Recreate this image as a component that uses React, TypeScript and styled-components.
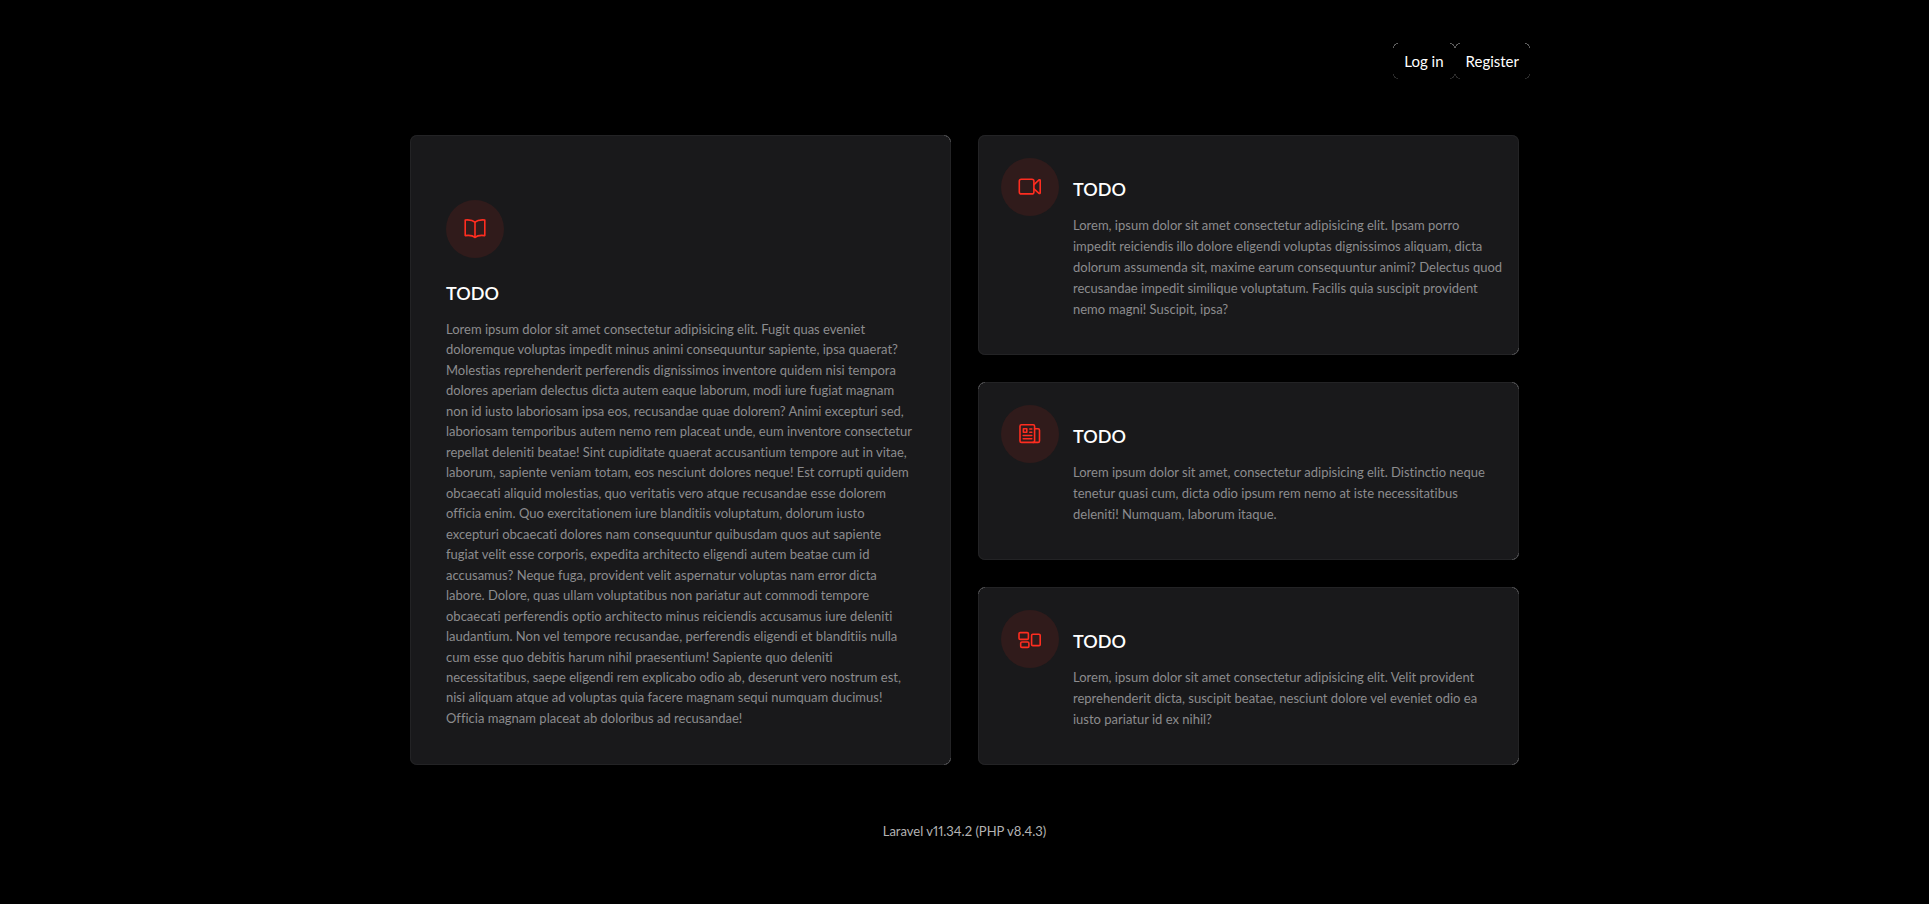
import React from 'react';
import styled, { createGlobalStyle, css } from 'styled-components';

const GlobalStyle = createGlobalStyle`
  *, *::before, *::after { box-sizing: border-box; }
  body {
    margin: 0;
    background: #000;
    color: #8c8c8e;
    font-family: Lato, "Open Sans", sans-serif;
    font-size: 13px;
    font-variant-ligatures: none;
    -webkit-font-smoothing: antialiased;
  }
`;

/* Faint highlights that run along the rounded corners of a box. */
const corner = (x: string, y: string, radius: number, color: string) =>
  `radial-gradient(circle at ${x === 'left' ? '100%' : '0'} ${y === 'top' ? '100%' : '0'},
    transparent ${radius - 1}px, ${color} ${radius - 1}px, ${color} ${radius}px, transparent ${radius}px)
    ${x} ${y} / ${radius}px ${radius}px no-repeat`;

const Page = styled.div`
  width: 100%;
  max-width: 1157px;
  margin: 0 auto;
  padding: 43px 24px 56px;
`;

const Nav = styled.nav`
  display: flex;
  justify-content: flex-end;
  margin-right: -11px;
`;

const NavLink = styled.a`
  padding: 7px 11px;
  border-radius: 5px;
  color: #fff;
  font-size: 15px;
  line-height: 22px;
  text-decoration: none;
  background:
    ${corner('left', 'top', 5, '#6a6a6a')},
    ${corner('right', 'top', 5, '#6a6a6a')},
    ${corner('left', 'bottom', 5, '#333')},
    ${corner('right', 'bottom', 5, '#333')};
`;

const Cards = styled.main`
  display: grid;
  grid-template-columns: minmax(0, 1fr);
  gap: 27px;
  margin-top: 56px;

  @media (min-width: 1100px) {
    grid-template-columns: repeat(2, minmax(0, 1fr));
  }
`;

type Corner = 'top-left' | 'top-right' | 'bottom-right';

const Card = styled.a<{ $tall?: boolean; $corners: Corner[] }>`
  position: relative;
  display: flex;
  border-radius: 7px;
  background: #19191b;
  box-shadow: inset 0 0 0 1px #232325;
  color: inherit;
  text-decoration: none;

  &::after {
    content: "";
    position: absolute;
    inset: 0;
    border-radius: 7px;
    pointer-events: none;
    background: ${p => p.$corners.map(c => {
      const [y, x] = c.split('-');
      return corner(x, y, 7, '#4a4a4c');
    }).join(', ')};
  }

  ${p => p.$tall
    ? css`
        flex-direction: column;
        padding: 65px 36px 37px;
        @media (min-width: 1100px) { grid-row: span 3; }
      `
    : css`
        gap: 14px;
        padding: 23px 23px 35px;
      `}
`;

const IconDisc = styled.div`
  display: flex;
  flex: none;
  align-items: center;
  justify-content: center;
  width: 58px;
  height: 58px;
  border-radius: 50%;
  background: rgba(255, 45, 32, 0.1);

  svg {
    width: 24px;
    height: 24px;
    fill: none;
    stroke: #ff2d20;
    stroke-width: 1.6;
    stroke-linecap: round;
    stroke-linejoin: round;
  }
`;

const Body = styled.div<{ $tall?: boolean }>`
  display: flex;
  flex: 1;
  flex-direction: column;
  min-width: 0;
  padding-top: ${p => (p.$tall ? 22 : 18)}px;
`;

const Title = styled.h2`
  margin: 0;
  color: #fff;
  font-size: 18px;
  font-weight: 600;
  line-height: 26px;
`;

const Text = styled.p<{ $tall?: boolean }>`
  margin: 13px 0 0;
  line-height: ${p => (p.$tall ? 20 : 21)}px;

  @media (min-width: 1100px) {
    display: flex;
    flex: 1;
    flex-direction: column;
    justify-content: space-between;
    white-space: nowrap;
  }
`;

const Footer = styled.footer`
  margin-top: 56px;
  color: #b3b3b3;
  line-height: 20px;
  text-align: center;
  font-variant-numeric: proportional-nums;
`;

const BookIcon = () => (
  <svg viewBox="0 0 24 24" aria-hidden="true">
    <path d="M12 5.2C9.6 3 6 2.6 2.2 3v15.6c3.8-.5 7.6-.1 9.8 1.7V5.2Z" />
    <path d="M12 5.2C14.4 3 18 2.6 21.8 3v15.6c-3.8-.5-7.6-.1-9.8 1.7" />
  </svg>
);

const VideoIcon = () => (
  <svg viewBox="0 0 24 24" aria-hidden="true">
    <rect x="1.3" y="4.3" width="14.6" height="14.6" rx="2" />
    <path d="M16 9.6 21 4.9c.5-.4 1.2-.2 1.2.5v12.4c0 .7-.7.9-1.2.5l-5-4.5" />
  </svg>
);

const NewsIcon = () => (
  <svg viewBox="0 0 24 24" aria-hidden="true">
    <rect x="2" y="2.8" width="14.6" height="17.6" rx="1.4" />
    <path d="M16.6 6.8h3.5c.8 0 1.4.6 1.4 1.4v10.8c0 .8-.6 1.4-1.4 1.4h-5" />
    <rect x="5.4" y="6.8" width="3.4" height="3.4" />
    <path d="M11.8 7h2M11.8 10.2h2M5.2 13.5h8.6M5.2 16.8h8.6" />
  </svg>
);

const DashboardIcon = () => (
  <svg viewBox="0 0 24 24" aria-hidden="true">
    <rect x="1" y="5.6" width="9.4" height="6.8" rx="1.2" />
    <rect x="2.7" y="15" width="8.2" height="5.4" rx="1.2" />
    <rect x="13.6" y="7.2" width="8.6" height="11.4" rx="1.2" />
  </svg>
);

interface CardData {
  icon: React.ReactNode;
  tall?: boolean;
  corners: Corner[];
  lines: string[];
}

const cards: CardData[] = [
  {
    icon: <BookIcon />,
    tall: true,
    corners: ['top-right', 'bottom-right'],
    lines: [
      'Lorem ipsum dolor sit amet consectetur adipisicing elit. Fugit quas eveniet',
      'doloremque voluptas impedit minus animi consequuntur sapiente, ipsa quaerat?',
      'Molestias reprehenderit perferendis dignissimos inventore quidem nisi tempora',
      'dolores aperiam delectus dicta autem eaque laborum, modi iure fugiat magnam',
      'non id iusto laboriosam ipsa eos, recusandae quae dolorem? Animi excepturi sed,',
      'laboriosam temporibus autem nemo rem placeat unde, eum inventore consectetur',
      'repellat deleniti beatae! Sint cupiditate quaerat accusantium tempore aut in vitae,',
      'laborum, sapiente veniam totam, eos nesciunt dolores neque! Est corrupti quidem',
      'obcaecati aliquid molestias, quo veritatis vero atque recusandae esse dolorem',
      'officia enim. Quo exercitationem iure blanditiis voluptatum, dolorum iusto',
      'excepturi obcaecati dolores nam consequuntur quibusdam quos aut sapiente',
      'fugiat velit esse corporis, expedita architecto eligendi autem beatae cum id',
      'accusamus? Neque fuga, provident velit aspernatur voluptas nam error dicta',
      'labore. Dolore, quas ullam voluptatibus non pariatur aut commodi tempore',
      'obcaecati perferendis optio architecto minus reiciendis accusamus iure deleniti',
      'laudantium. Non vel tempore recusandae, perferendis eligendi et blanditiis nulla',
      'cum esse quo debitis harum nihil praesentium! Sapiente quo deleniti',
      'necessitatibus, saepe eligendi rem explicabo odio ab, deserunt vero nostrum est,',
      'nisi aliquam atque ad voluptas quia facere magnam sequi numquam ducimus!',
      'Officia magnam placeat ab doloribus ad recusandae!',
    ],
  },
  {
    icon: <VideoIcon />,
    corners: ['bottom-right'],
    lines: [
      'Lorem, ipsum dolor sit amet consectetur adipisicing elit. Ipsam porro',
      'impedit reiciendis illo dolore eligendi voluptas dignissimos aliquam, dicta',
      'dolorum assumenda sit, maxime earum consequuntur animi? Delectus quod',
      'recusandae impedit similique voluptatum. Facilis quia suscipit provident',
      'nemo magni! Suscipit, ipsa?',
    ],
  },
  {
    icon: <NewsIcon />,
    corners: ['top-left', 'top-right', 'bottom-right'],
    lines: [
      'Lorem ipsum dolor sit amet, consectetur adipisicing elit. Distinctio neque',
      'tenetur quasi cum, dicta odio ipsum rem nemo at iste necessitatibus',
      'deleniti! Numquam, laborum itaque.',
    ],
  },
  {
    icon: <DashboardIcon />,
    corners: ['top-left', 'top-right', 'bottom-right'],
    lines: [
      'Lorem, ipsum dolor sit amet consectetur adipisicing elit. Velit provident',
      'reprehenderit dicta, suscipit beatae, nesciunt dolore vel eveniet odio ea',
      'iusto pariatur id ex nihil?',
    ],
  },
];

export default function App() {
  return (
    <>
      <GlobalStyle />
      <Page>
        <Nav>
          <NavLink href="#login">Log in</NavLink>
          <NavLink href="#register">Register</NavLink>
        </Nav>
        <Cards>
          {cards.map((card, i) => (
            <Card key={i} href="#" $tall={card.tall} $corners={card.corners}>
              <IconDisc>{card.icon}</IconDisc>
              <Body $tall={card.tall}>
                <Title>TODO</Title>
                <Text $tall={card.tall}>
                  {card.lines.map(line => (
                    <span key={line}>{line} </span>
                  ))}
                </Text>
              </Body>
            </Card>
          ))}
        </Cards>
        <Footer>Laravel v11.34.2 (PHP v8.4.3)</Footer>
      </Page>
    </>
  );
}
